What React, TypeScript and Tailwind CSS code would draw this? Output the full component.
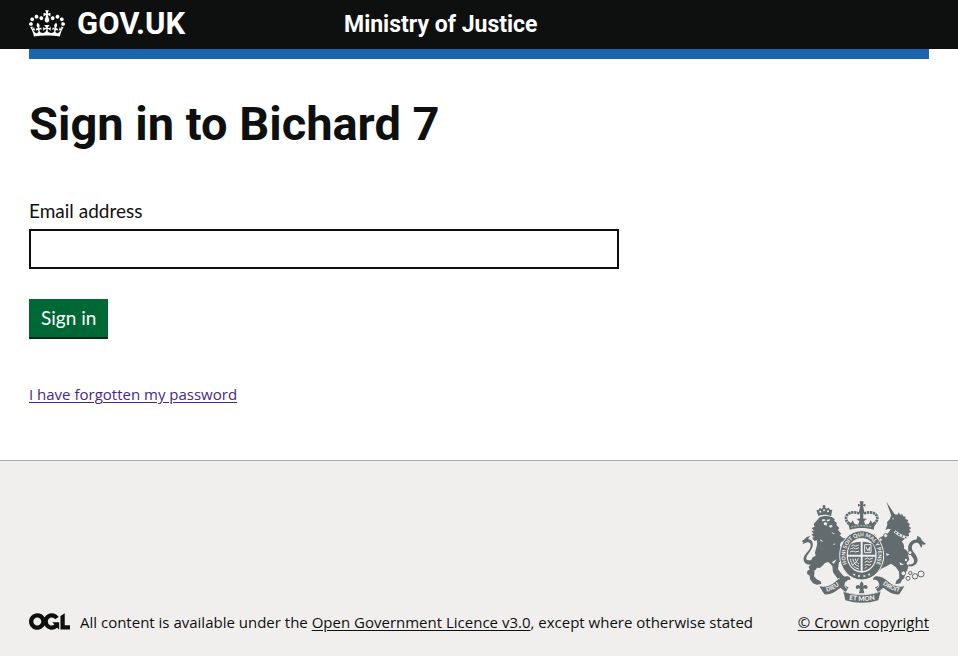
import type { ReactNode } from "react";

function Container({ className = "", children }: { className?: string; children?: ReactNode }) {
  return <div className={`mx-auto w-full max-w-[1018px] px-[29px] ${className}`}>{children}</div>;
}

function CrownLogo() {
  return (
    <svg aria-hidden="true" viewBox="0 0 132 97" className="h-[27px] w-9 shrink-0" fill="currentColor">
      <path
        fillRule="evenodd"
        d="M25 30.2c3.5 1.5 7.7-.2 9.1-3.7 1.5-3.6-.2-7.8-3.9-9.2-3.6-1.4-7.6.3-9.1 3.9-1.4 3.5.3 7.5 3.9 9zM9 39.5c3.6 1.5 7.8-.2 9.2-3.7 1.5-3.6-.2-7.8-3.9-9.1-3.6-1.5-7.6.2-9.1 3.8-1.4 3.5.3 7.5 3.8 9zM4.4 57.2c3.5 1.5 7.7-.2 9.1-3.8 1.5-3.6-.2-7.7-3.9-9.1-3.5-1.5-7.6.3-9.1 3.8-1.4 3.5.3 7.6 3.9 9.1zm38.3-21.4c3.5 1.5 7.7-.2 9.1-3.8 1.5-3.6-.2-7.7-3.9-9.1-3.6-1.5-7.6.3-9.1 3.8-1.3 3.6.4 7.7 3.9 9.1zm64.4-5.6c-3.6 1.5-7.8-.2-9.1-3.7-1.5-3.6.2-7.8 3.8-9.2 3.6-1.4 7.7.3 9.2 3.9 1.3 3.5-.4 7.5-3.9 9zm15.9 9.3c-3.6 1.5-7.7-.2-9.1-3.7-1.5-3.6.2-7.8 3.7-9.1 3.6-1.5 7.7.2 9.2 3.8 1.5 3.5-.3 7.5-3.8 9zm4.7 17.7c-3.6 1.5-7.8-.2-9.2-3.8-1.5-3.6.2-7.7 3.9-9.1 3.6-1.5 7.7.3 9.2 3.8 1.3 3.5-.4 7.6-3.9 9.1zM89.3 35.8c-3.6 1.5-7.8-.2-9.2-3.8-1.4-3.6.2-7.7 3.9-9.1 3.6-1.5 7.7.3 9.2 3.8 1.4 3.6-.3 7.7-3.9 9.1zM69.7 17.7l8.9 4.7V9.3l-8.9 2.8c-.2-.3-.5-.6-.9-.9L72.4 0H59.6l3.5 11.2c-.3.3-.6.5-.9.9l-8.8-2.8v13.1l8.8-4.7c.3.3.6.7.9.9l-5 15.4v.1c-.2.8-.4 1.6-.4 2.4 0 4.1 3.1 7.5 7 8.1h.2c.3 0 .7.1 1 .1.4 0 .7 0 1-.1h.2c4-.6 7.1-4.1 7.1-8.1 0-.8-.1-1.7-.4-2.4V34l-5.1-15.4c.4-.2.7-.6 1-.9zM66 92.8c16.9 0 32.8 1.1 47.1 3.2 4-16.9 8.9-26.7 14-33.5l-9.6-3.4c1 4.9 1.1 7.2 0 10.2-1.5-1.4-3-4.3-4.2-8.7L108.6 76c2.8-2 5-3.2 7.5-3.3-4.4 9.4-10 11.9-13.6 11.2-4.3-.8-6.3-4.6-5.6-7.9 1-4.7 5.7-5.9 8-.5 4.3-8.7-3-11.4-7.6-8.8 7.1-7.2 7.9-13.5 2.1-21.1-8 6.1-8.1 12.3-4.5 20.8-4.7-5.4-12.1-2.5-9.5 6.2 3.4-5.2 7.9-2 7.2 3.1-.6 4.3-6.4 7.8-13.5 7.2-10.3-.9-10.9-8-11.2-13.8 2.5-.5 7.1 1.8 11 7.3L80.2 60c-4.1 4.4-8 5.3-12.3 5.4 1.4-4.4 8-11.6 8-11.6H55.5s6.4 7.2 7.9 11.6c-4.2-.1-8-1-12.3-5.4l1.4 16.4c3.9-5.5 8.5-7.7 10.9-7.3-.3 5.8-.9 12.8-11.1 13.8-7.2.6-12.9-2.9-13.5-7.2-.7-5 3.8-8.3 7.1-3.1 2.7-8.7-4.6-11.6-9.4-6.2 3.7-8.5 3.6-14.7-4.6-20.8-5.8 7.6-5 13.9 2.2 21.1-4.7-2.6-11.9.1-7.7 8.8 2.3-5.5 7.1-4.2 8.1.5.7 3.3-1.3 7.1-5.7 7.9-3.5.7-9-1.8-13.5-11.2 2.5.1 4.7 1.3 7.5 3.3l-4.7-15.4c-1.2 4.4-2.7 7.2-4.3 8.7-1.1-3-.9-5.3 0-10.2l-9.5 3.4c5 6.9 9.9 16.7 14 33.5 14.8-2.1 30.8-3.2 47.7-3.2z"
      />
    </svg>
  );
}

function OglLogo() {
  return (
    <svg role="img" aria-label="Open Government Licence" viewBox="0 0 483.2 195.7" className="mb-[2px] h-[17px] w-[41px] shrink-0" fill="currentColor">
      <path d="M421.5 142.8V.1l-50.7 32.3v161.1h112.4v-50.7zm-122.3-9.6A47.12 47.12 0 0 1 221 97.8c0-26 21.1-47.1 47.1-47.1 16.7 0 31.4 8.7 39.7 21.8l42.7-27.2A97.63 97.63 0 0 0 268.1 0c-36.5 0-68.3 20.1-85.1 49.7A98 98 0 0 0 97.8 0C43.9 0 0 43.9 0 97.8s43.9 97.8 97.8 97.8c36.5 0 68.3-20.1 85.1-49.7a97.76 97.76 0 0 0 149.6 25.4l19.4 22.2h3v-87.8h-80l24.3 27.5zM97.8 145c-26 0-47.1-21.1-47.1-47.1s21.1-47.1 47.1-47.1 47.1 21.1 47.1 47.1S123.8 145 97.8 145" />
    </svg>
  );
}

const INK = "#626b6d";
const PAPER = "#f0efee";

function RoyalArms() {
  return (
    <svg aria-hidden="true" viewBox="15 15 375 306" className="h-[102px] w-[125px]" fill={INK} fontFamily="Lato, sans-serif" fontWeight="900">
      {/* lion's crown */}
      <path d="M67 60 61 42l6 1 4-7 6 3 7-8 8 7 6-3 5 7 6-1-4 20c-11-6-26-6-38-1z" />
      <circle cx="84" cy="31" r="4" />
      <g fill={PAPER}>
        <circle cx="73" cy="47" r="3" /><circle cx="84" cy="43" r="3" /><circle cx="96" cy="46" r="3" />
      </g>
      {/* lion */}
      <path d="M71 64c11-5 25-5 36-1l9 6-1 6 8 6-2 6 9 9-4 6 10 11-5 5 11 9 8-1 6 6-10 7-8-3c-4 4-6 8-6 13l4 9-2 12c4 8 6 17 5 27l-10 1-3 22 13 16 10 10 6 6-5 6-11-6-8-7-6 3-14-19-2-19-12-12-10 3-9 10-7 5-8-1-7 12-2 14 8 9 12 6 2 8-14 2-11-4-9-12-1-11-8-6 1-9 7-3-3-9 7-7-2-8 7-13 9-5-2-9c4-15 9-27 5-38l-7 3-7-10 6-1-8-9 7-2-7-8 8-1-7-8 9-4-3-8z" />
      <path d="M48 205c-13 4-23-2-25-12-3-14 13-24 19-36 4-8 2-17-5-18-6-1-12 5-18 5 6-4 3-8-2-7 3-7 7-5 10-9 4-4 8-8 16-7-4 3-6 6-6 9 12 0 16 12 12 24-6 15-19 25-18 34 1 5 7 6 13 4z" />
      <g fill={PAPER}>
        <path d="M80 69l9 2-3 4-8 1zM93 71l10-1-3 5-8 1zM83 81l6-3 5 4-3 7-7-3zM98 89l9-2 3 5-7 3zM108 198l14-8-9 14zM53 225l13-7-6 12z" />
        <path d="M106 108l12 6-8-1zM74 130l8 8-9-3zM118 145l-9 3 8-6z" />
      </g>
      {/* unicorn */}
      <path d="M271 17l26 39-10 6z" />
      <path d="M274 86l-1-7 8-9 4-11 9-4 10 1 5-7 3 8 7-3 2 7 8 1-1 7 9 3-3 7 8 5-4 6 7 6-5 5 5 7-7 3 1 9-9 3c-3 5-8 10-13 13 4 4 9 12 7 22 9 3 13 10 12 18l4 15-9 10 6 9-3 13-9 10 1 12-8 7-5 10-15 3 3-11 9-8-1-19-9-13-15-11-11 6-18 9-10 9-14 7-2-9 15-8 15-15 5-16-9-10-3-17-8-1-9-10-10 3-10-7 4-10-5-8 6-8 8 3-2-7 9 1 5 9-3 7 7 5 7-11 13-8 11-5 8-12-8-2-8 5z" />
      <path d="M337 205c15 3 22-8 14-19-9-13-17-22-14-36 3-12 13-20 23-19 3-4 5-8 3-11 8 1 13 7 14 13 6 3 8 9 13 10-5 5-10 3-12 0 2 5-1 8-1 13-5-3-4-9-10-14-8-4-17 1-19 9-3 12 7 18 13 29 11 17-3 34-24 31z" />
      <path fill={PAPER} d="M288 67l6 0-3 4zM270 171l11 5-9 3zM310 198l14 9-11 0zM250 141l8 4-9 5z" />
      <path d="M296 106l12 9 10 5 16 6" fill="none" stroke={PAPER} strokeWidth="8" />
      <path d="M298 108l4 3M307 114l4 3M317 119l4 2M327 123l4 2" fill="none" stroke={INK} strokeWidth="5" />
      <g fill={PAPER} stroke={INK} strokeWidth="3">
        <circle cx="269" cy="119" r="6" /><circle cx="254" cy="131" r="5" /><circle cx="342" cy="170" r="6" />
        <circle cx="330" cy="192" r="5" /><circle cx="322" cy="232" r="7" /><circle cx="336" cy="247" r="6" />
        <circle cx="343" cy="231" r="5" /><circle cx="357" cy="241" r="8" /><circle cx="375" cy="234" r="9" />
      </g>
      {/* imperial crown */}
      <path d="M193 29l-7 3v-9l7 3-2-10h12l-2 10 7-3v9l-7-3 3 14c2 5 0 9-3 10h-8c-4-1-5-6-3-10z" />
      <g fill="none" stroke={INK} strokeWidth="8" strokeDasharray="7 2">
        <path d="M190 53c-18-9-39-2-40 12-1 9 6 16 13 24" />
        <path d="M204 53c18-9 39-2 40 12 1 9-6 16-13 24" />
      </g>
      <path d="M192 50h10v22h-10zM161 101l-5-26 9 6 5-8 6 11 10 2 4-10-8-7 15-3 15 3-8 7 4 10 10-2 6-11 5 8 9-6-5 26c-23-7-49-7-72 0z" />
      <path d="M166 93c20-5 42-5 62 0" fill="none" stroke={PAPER} strokeWidth="2" strokeDasharray="6 3" />
      {/* garter */}
      <ellipse cx="197" cy="178" rx="66" ry="74" stroke={PAPER} strokeWidth="3" />
      <path id="garter-line" d="M163 219A49 57 0 1 1 231 219" fill="none" />
      <text fontSize="16" fill={PAPER}>
        <textPath href="#garter-line" startOffset="50%" textAnchor="middle">HONI SOIT QUI MAL Y PENSE</textPath>
      </text>
      <path d="M172 235l5 2M186 240h6M202 240h6M217 237l5-2" stroke={PAPER} strokeWidth="5" />
      {/* shield */}
      <ellipse cx="197" cy="178" rx="45" ry="52" fill={PAPER} />
      <path fill={INK} d="M165 143c10-4 20-6 29-6v39h-38c0-14 3-24 9-33zM200 137c10 0 19 2 29 6 6 9 9 19 9 33h-38zM156 182h38v43c-22-3-37-20-38-43zM200 182h38c-1 23-16 40-38 43z" />
      <g fill="none" stroke={PAPER} strokeWidth="3">
        <path d="M166 150l7-3 4 4 11-4M163 159l10-4 5 4 11-4M162 168l10-3 6 3 11-3M206 146h19v24h-19zM210 152l5 12 7-11-3 13M206 190l8-4 6 4 11-4M206 199l8-4 5 4 10-4M206 208l8-3 5 3 6-3M206 217l6-3" />
        <path d="M164 188c0 16 8 27 25 31M171 188c1 12 7 21 18 23M178 188c1 8 5 14 11 16M187 187c-4 10-11 17-19 20" />
      </g>
      {/* foot flower */}
      <path d="M197 256c6 6 7 11 4 16 3-5 10-7 13-1 3 7-4 11-8 6l-4 2 3 13h-16l3-13-4-2c-4 5-11 1-8-6 3-6 10-4 13 1-3-5-2-10 4-16z" />
      {/* motto scroll */}
      <path d="M70 271c18 4 33-2 48-14 11-9 21-16 34-16 8 0 13 5 11 11-8-3-14 2-16 8-2 7 4 12 11 14l-9 15-16-14c-16 14-32 22-48 20z" />
      <path d="M325 271c-18 4-33-2-48-14-11-9-21-16-34-16-8 0-13 5-11 11 8-3 14 2 16 8 2 7-4 12-11 14l9 15 16-14c16 14 32 22 48 20z" />
      <path d="M142 286c35 14 76 14 112 0l-7 27c-33 10-66 10-99 0z" />
      <path d="M158 256c-12 4-16 12-5 22M237 256c12 4 16 12 5 22" fill="none" stroke={PAPER} strokeWidth="3" />
      <path d="M142 286c35 14 76 14 112 0" fill="none" stroke={PAPER} strokeWidth="2" />
      <path id="motto-left" d="M83 288C100 287 119 279 137 262" fill="none" />
      <path id="motto-mid" d="M146 308C180 317 215 317 250 308" fill="none" />
      <path id="motto-right" d="M254 259C272 277 295 287 318 289" fill="none" />
      <g fontSize="18" fill={PAPER}>
        <text><textPath href="#motto-left" startOffset="50%" textAnchor="middle">DIEU</textPath></text>
        <text fontSize="20"><textPath href="#motto-mid" startOffset="50%" textAnchor="middle">ET MON</textPath></text>
        <text><textPath href="#motto-right" startOffset="50%" textAnchor="middle">DROIT</textPath></text>
      </g>
    </svg>
  );
}

export default function App() {
  return (
    <div className="flex min-h-screen flex-col bg-white font-[Lato,sans-serif] text-[15px] text-[#0e100f]">
      <header className="bg-[#0e100f] text-white">
        <Container className="flex h-[49px] items-center font-bold">
          <a href="#home" className="flex w-[35%] items-center gap-3 pb-[2px] font-[Roboto,sans-serif] text-[31px] leading-8">
            <CrownLogo />
            GOV.UK
          </a>
          <a href="#service" className="font-[Roboto,sans-serif] text-[23px] leading-8">Ministry of Justice</a>
        </Container>
      </header>
      <Container>
        <div className="h-[10px] bg-[#1b64ae]" />
      </Container>

      <Container className="grow">
        <main className="pt-10">
          <h1 className="mb-12 font-[Roboto,sans-serif] text-[47px] leading-[50px] font-bold">Sign in to Bichard 7</h1>
          <div className="-mx-[15px]">
            <form className="w-2/3 px-[15px]" onSubmit={(e) => e.preventDefault()}>
              <label htmlFor="email" className="mb-1 block text-[19px] leading-7">Email address</label>
              <input id="email" type="email" className="mb-[30px] block h-10 w-full border-2 border-[#0e100f] px-1 text-[19px]" />
              <button type="submit" className="mb-[45px] block h-10 border-b-2 border-[#002d18] bg-[#006834] px-3 text-[19px] leading-6 text-white">
                Sign in
              </button>
            </form>
          </div>
          <p className="mb-14 font-['Open_Sans',sans-serif] leading-5">
            <a href="#reset" className="text-[#46288a] underline underline-offset-2">I have forgotten my password</a>
          </p>
        </main>
      </Container>

      <footer className="border-t border-[#a9acae] bg-[#f0efee] font-['Open_Sans',sans-serif]">
        <Container className="flex items-end justify-between pt-10 pb-6">
          <div className="flex items-end gap-[10px]">
            <OglLogo />
            <p className="leading-5">
              All content is available under the{" "}
              <a href="#licence" className="underline underline-offset-2">Open Government Licence v3.0</a>, except where otherwise stated
            </p>
          </div>
          <a href="#copyright" className="flex shrink-0 flex-col items-center gap-[9px] leading-5">
            <RoyalArms />
            <span className="underline underline-offset-2">© Crown copyright</span>
          </a>
        </Container>
      </footer>
    </div>
  );
}
